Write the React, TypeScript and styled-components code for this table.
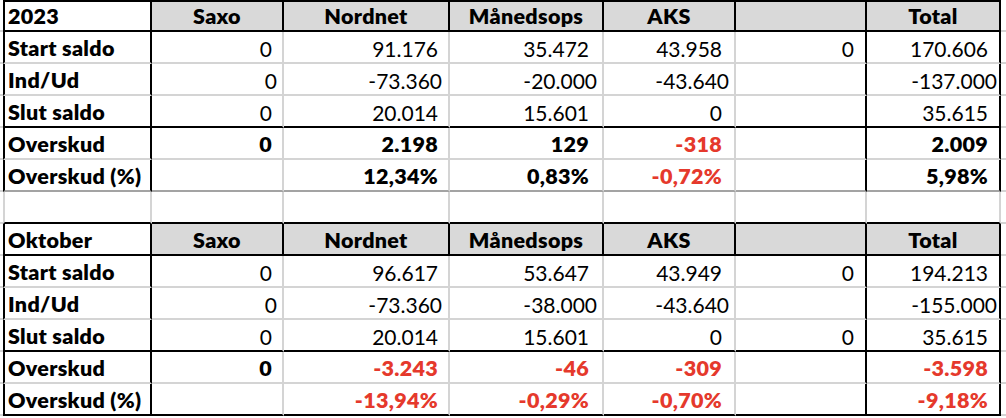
import React from 'react';
import styled, { createGlobalStyle } from 'styled-components';

const BLACK = '#000000';
const GRID = '#d4d4d4';
const DARK = '#a3a3a3';
const HEAD_BG = '#d9d9d9';
const RED = '#e5392c';

type Line = 'black' | 'gray' | 'dark';
const lineColor = (l: Line) => (l === 'black' ? BLACK : l === 'dark' ? DARK : GRID);

const Global = createGlobalStyle`
  html, body { margin: 0; padding: 0; background: #ffffff; }
  body { font-family: Lato, "Open Sans", Arial, sans-serif; }
`;

const Sheet = styled.div`
  display: flex;
  flex-direction: column;
  width: 1006px;
  height: 418px;
  overflow: hidden;
  background: #ffffff;
`;

const Row = styled.div`
  display: grid;
  grid-template-columns: 3px 149px 132px 166px 154px 132px 131px 134px 5px;
  height: 32px;
`;

type CellProps = {
  $align?: 'left' | 'center' | 'right';
  $bold?: boolean;
  $red?: boolean;
  $head?: boolean;
  $right?: Line;
  $bottom?: Line;
  $left?: Line;
  $top?: Line;
  $pr?: number;
};

const Cell = styled.div<CellProps>`
  box-sizing: border-box;
  display: flex;
  align-items: flex-end;
  justify-content: ${(p) =>
    p.$align === 'center' ? 'center' : p.$align === 'right' ? 'flex-end' : 'flex-start'};
  padding: 0 ${(p) => p.$pr ?? 0}px 3px ${(p) => (p.$align === 'left' ? 3 : 0)}px;
  font-size: ${(p) => (p.$bold ? 21.5 : 21)}px;
  line-height: 1;
  font-weight: ${(p) => (p.$bold ? 800 : 400)};
  letter-spacing: ${(p) => (p.$bold ? 0.3 : 0)}px;
  color: ${(p) => (p.$red ? RED : '#000000')};
  background: ${(p) => (p.$head ? HEAD_BG : '#ffffff')};
  white-space: nowrap;
  overflow: visible;
  ${(p) => (p.$right ? `border-right: 2px solid ${lineColor(p.$right)};` : '')}
  ${(p) => (p.$left ? `border-left: 2px solid ${lineColor(p.$left)};` : '')}
  ${(p) => (p.$top ? `border-top: 2px solid ${lineColor(p.$top)};` : '')}
  ${(p) => (p.$bottom ? `border-bottom: 2px solid ${lineColor(p.$bottom)};` : '')}
`;

const Margin = styled.div<{ $bottom?: Line }>`
  box-sizing: border-box;
  ${(p) => (p.$bottom ? `border-bottom: 2px solid ${lineColor(p.$bottom)};` : '')}
`;

const HEADERS = ['Saxo', 'Nordnet', 'Månedsops', 'AKS', '', 'Total'];
const PAD = [10, 10, 13, 12, 11, 11];
const PAD_IND = [5, 6, 5, 5, 5, 2];

type Block = { title: string; rows: string[][] };

const TABLES: Block[] = [
  {
    title: '2023',
    rows: [
      ['Start saldo', '0', '91.176', '35.472', '43.958', '0', '170.606'],
      ['Ind/Ud', '0', '-73.360', '-20.000', '-43.640', '', '-137.000'],
      ['Slut saldo', '0', '20.014', '15.601', '0', '', '35.615'],
      ['Overskud', '0', '2.198', '129', '-318', '', '2.009'],
      ['Overskud (%)', '', '12,34%', '0,83%', '-0,72%', '', '5,98%'],
    ],
  },
  {
    title: 'Oktober',
    rows: [
      ['Start saldo', '0', '96.617', '53.647', '43.949', '0', '194.213'],
      ['Ind/Ud', '0', '-73.360', '-38.000', '-43.640', '', '-155.000'],
      ['Slut saldo', '0', '20.014', '15.601', '0', '0', '35.615'],
      ['Overskud', '0', '-3.243', '-46', '-309', '', '-3.598'],
      ['Overskud (%)', '', '-13,94%', '-0,29%', '-0,70%', '', '-9,18%'],
    ],
  },
];

function HeaderRow({ title, first }: { title: string; first: boolean }) {
  const top: Line | undefined = first ? 'black' : undefined;
  return (
    <Row>
      <Margin $bottom="gray" />
      <Cell $align="left" $bold $left="black" $right="black" $top={top} $bottom="black">
        {title}
      </Cell>
      {HEADERS.map((h, i) => (
        <Cell key={i} $align="center" $bold $head $right="black" $top={top} $bottom="black">
          {h}
        </Cell>
      ))}
      <Margin $bottom="gray" />
    </Row>
  );
}

function DataRow({ cells, idx, lastLine }: { cells: string[]; idx: number; lastLine: Line }) {
  const [label, ...values] = cells;
  const bottom: Line = idx === 2 ? 'black' : idx === 4 ? lastLine : 'gray';
  const bold = idx >= 3;
  const pads = idx === 1 ? PAD_IND : PAD;
  return (
    <Row>
      <Margin $bottom="gray" />
      <Cell $align="left" $bold $left="black" $right="black" $bottom={bottom}>
        {label}
      </Cell>
      {values.map((v, i) => (
        <Cell
          key={i}
          $align="right"
          $bold={bold}
          $red={bold && v.startsWith('-')}
          $right={i >= 4 ? 'black' : 'gray'}
          $bottom={bottom}
          $pr={pads[i]}
        >
          {v}
        </Cell>
      ))}
      <Margin $bottom="gray" />
    </Row>
  );
}

function SpacerRow() {
  return (
    <Row>
      <Margin $bottom="gray" />
      <Cell $left="gray" $right="gray" $bottom="black" />
      {HEADERS.map((_, i) => (
        <Cell key={i} $right="gray" $bottom="black" />
      ))}
      <Margin $bottom="gray" />
    </Row>
  );
}

export default function App() {
  return (
    <>
      <Global />
      <Sheet>
        {TABLES.map((t, ti) => (
          <React.Fragment key={t.title}>
            {ti > 0 && <SpacerRow />}
            <HeaderRow title={t.title} first={ti === 0} />
            {t.rows.map((r, ri) => (
              <DataRow key={ri} cells={r} idx={ri} lastLine={ti === 0 ? 'dark' : 'black'} />
            ))}
          </React.Fragment>
        ))}
      </Sheet>
    </>
  );
}
